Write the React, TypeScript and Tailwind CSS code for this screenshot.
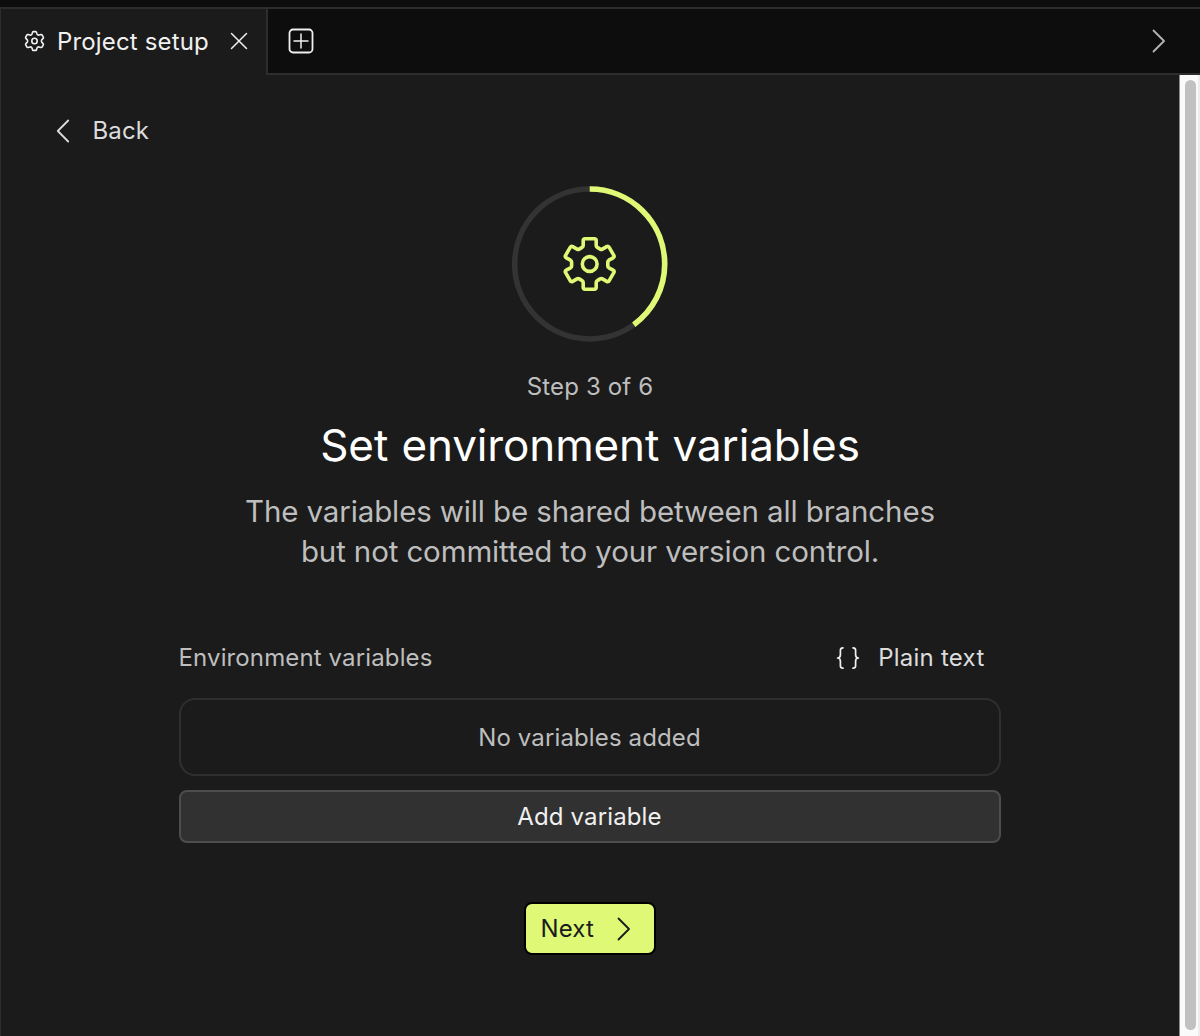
import React from "react";

const BIG_GEAR =
  "M-4.6 -25.2H4.6Q6.5 -25.2 6.5 -23.3V-18.4Q6.5 -17.2 7.6 -16.6L10.5 -14.9Q11.6 -14.3 12.7 -14.9L17 -17.4Q18.6 -18.3 19.5 -16.6L24.1 -8.7Q25 -7 23.4 -6.1L19.2 -3.8Q18.1 -3.1 18.1 -1.9V1.9Q18.1 3.1 19.2 3.8L23.4 6.1Q25 7 24.1 8.7L19.5 16.6Q18.6 18.3 17 17.4L12.7 14.9Q11.6 14.3 10.5 14.9L7.6 16.6Q6.5 17.2 6.5 18.4V23.3Q6.5 25.2 4.6 25.2H-4.6Q-6.5 25.2 -6.5 23.3V18.4Q-6.5 17.2 -7.6 16.6L-10.5 14.9Q-11.6 14.3 -12.7 14.9L-17 17.4Q-18.6 18.3 -19.5 16.6L-24.1 8.7Q-25 7 -23.4 6.1L-19.2 3.8Q-18.1 3.1 -18.1 1.9V-1.9Q-18.1 -3.1 -19.2 -3.8L-23.4 -6.1Q-25 -7 -24.1 -8.7L-19.5 -16.6Q-18.6 -18.3 -17 -17.4L-12.7 -14.9Q-11.6 -14.3 -10.5 -14.9L-7.6 -16.6Q-6.5 -17.2 -6.5 -18.4V-23.3Q-6.5 -25.2 -4.6 -25.2Z";

const SMALL_GEAR =
  "M-1.2 -9.4H1.2Q1.9 -9.4 2.1 -8.5L2.5 -7Q3 -5.7 4.4 -5.9L6.3 -6.4Q7.2 -6.6 7.6 -6L8.8 -3.9Q9.2 -3.2 8.6 -2.6L7.2 -1.1Q6.5 0 7.2 1.1L8.6 2.6Q9.2 3.2 8.8 3.9L7.6 6Q7.2 6.6 6.3 6.4L4.4 5.9Q3 5.7 2.5 7L2.1 8.5Q1.9 9.4 1.2 9.4H-1.2Q-1.9 9.4 -2.1 8.5L-2.5 7Q-3 5.7 -4.4 5.9L-6.3 6.4Q-7.2 6.6 -7.6 6L-8.8 3.9Q-9.2 3.2 -8.6 2.6L-7.2 1.1Q-6.5 0 -7.2 -1.1L-8.6 -2.6Q-9.2 -3.2 -8.8 -3.9L-7.6 -6Q-7.2 -6.6 -6.3 -6.4L-4.4 -5.9Q-3 -5.7 -2.5 -7L-2.1 -8.5Q-1.9 -9.4 -1.2 -9.4Z";

function Chevron({ left = false, className = "" }: { left?: boolean; className?: string }) {
  return (
    <svg width="14" height="24" viewBox="0 0 14 24" fill="none" stroke="currentColor" strokeWidth="1.8" strokeLinecap="round" strokeLinejoin="round" className={className}>
      <path d={left ? "M12.2 1.5L1.8 12L12.2 22.5" : "M1.5 1.5L12 12L1.5 22.5"} />
    </svg>
  );
}

function TabBar() {
  return (
    <div className="flex h-[68px] shrink-0">
      <div className="flex w-[268px] items-center border-t-2 border-r-2 border-l border-[#2d2d2d] bg-[#1b1b1b] pb-px pl-[22.5px] text-[#f0f0f0]">
        <svg width="22" height="22" viewBox="-10.5 -11 22 22" fill="none" stroke="currentColor" strokeWidth="1.6" strokeLinejoin="round" className="mb-px">
          <path d={SMALL_GEAR} />
          <circle r="2.7" />
        </svg>
        <span className="mt-px ml-[11.5px] w-[153px] tracking-[0.15px] whitespace-nowrap">Project setup</span>
        <svg width="18" height="18" viewBox="0 0 18 18" stroke="currentColor" strokeWidth="1.5" strokeLinecap="round" className="mb-[2px] ml-5">
          <path d="M1.5 1.5L16.5 16.5M16.5 1.5L1.5 16.5" />
        </svg>
      </div>
      <div className="flex flex-1 items-center justify-between border-y-2 border-[#2d2d2d] bg-[#0d0d0d] pr-[34px] pl-5">
        <svg width="26" height="26" viewBox="0 0 26 26" fill="none" stroke="#f0f0f0" strokeLinecap="round">
          <rect x="1.5" y="1.5" width="23" height="23" rx="3.5" strokeWidth="1.8" />
          <path d="M13 6V20M6 13H20" strokeWidth="1.5" />
        </svg>
        <Chevron className="text-[#b4b4b4]" />
      </div>
    </div>
  );
}

function StepProgress() {
  return (
    <svg width="156" height="156" viewBox="-77.7 -78 156 156" fill="none">
      <circle r="75" stroke="#333333" strokeWidth="5.6" />
      <circle r="75" stroke="#dff976" strokeWidth="5.6" pathLength="100" strokeDasharray="40 60" transform="rotate(-90)" />
      <g stroke="#dff976" strokeWidth="3.6" strokeLinejoin="round">
        <path d={BIG_GEAR} />
        <circle r="7.4" />
      </g>
    </svg>
  );
}

export default function App() {
  return (
    <div className="flex h-[1036px] w-[1200px] flex-col overflow-hidden bg-[#0d0d0d] pt-[7px] font-['Inter',sans-serif] text-2xl tracking-[0.13px]">
      <TabBar />
      <div className="flex min-h-0 flex-1">
        <main className="flex flex-1 flex-col items-center border-l border-[#2d2d2d] bg-[#1b1b1b] pr-px">
          <button className="mt-[37px] ml-[55px] flex h-[38px] items-center gap-[22.5px] self-start text-[#dcdcdc]">
            <Chevron left />
            <span>Back</span>
          </button>
          <div className="mt-9">
            <StepProgress />
          </div>
          <p className="mt-[29px] h-8 pl-px leading-8 text-[#bebebe]">Step 3 of 6</p>
          <h1 className="mt-[15px] pl-px text-[44px] leading-[54px] tracking-[-0.12px] text-white [word-spacing:1px]">Set environment variables</h1>
          <p className="mt-[19px] pl-px text-center text-[29.5px] leading-10 tracking-[-0.13px] text-[#bebebe]">
            The variables will be shared between all branches
            <br />
            but not committed to your version control.
          </p>
          <section className="mt-[67px] flex w-[822px] flex-col">
            <div className="flex h-10 items-center justify-between">
              <h2 className="text-[#bebebe]">Environment variables</h2>
              <button className="mr-4 mb-px flex items-center gap-[18px] text-[#dcdcdc]">
                <svg width="24" height="24" viewBox="0 0 24 24" fill="none" stroke="#f0f0f0" strokeWidth="1.7" strokeLinecap="round" strokeLinejoin="round">
                  <path d="M7 1.8C5 1.8 4.4 2.7 4.4 4.2V8.8C4.4 10.6 3.6 12 1.6 12C3.6 12 4.4 13.4 4.4 15.2V19.8C4.4 21.3 5 22.2 7 22.2M17 1.8C19 1.8 19.6 2.7 19.6 4.2V8.8C19.6 10.6 20.4 12 22.4 12C20.4 12 19.6 13.4 19.6 15.2V19.8C19.6 21.3 19 22.2 17 22.2" />
                </svg>
                <span className="tracking-[0.25px]">Plain text</span>
              </button>
            </div>
            <div className="mt-5 flex h-[78px] items-center justify-center rounded-2xl border-2 border-[#2f2f2f] pt-[2px] text-[#bebebe]">No variables added</div>
            <button className="mt-[14px] flex h-[53px] items-center justify-center rounded-lg border-2 border-[#4d4d4d] bg-[#313131] text-[#f0f0f0]">Add variable</button>
          </section>
          <button className="mt-[59px] flex h-[53px] w-[132px] items-center justify-between rounded-lg border-2 border-black bg-[#dff976] pr-[23px] pl-[15px] text-[#1b1b1b]">
            Next
            <Chevron />
          </button>
        </main>
        <div className="flex w-[21px] justify-center border-r-2 border-l border-r-[#ececec] border-l-[#888888] bg-[#fafafa] pt-[5px] pb-[6px] pl-[3px]">
          <div className="w-[11.5px] rounded-full bg-[#c1c1c1]" />
        </div>
      </div>
    </div>
  );
}
